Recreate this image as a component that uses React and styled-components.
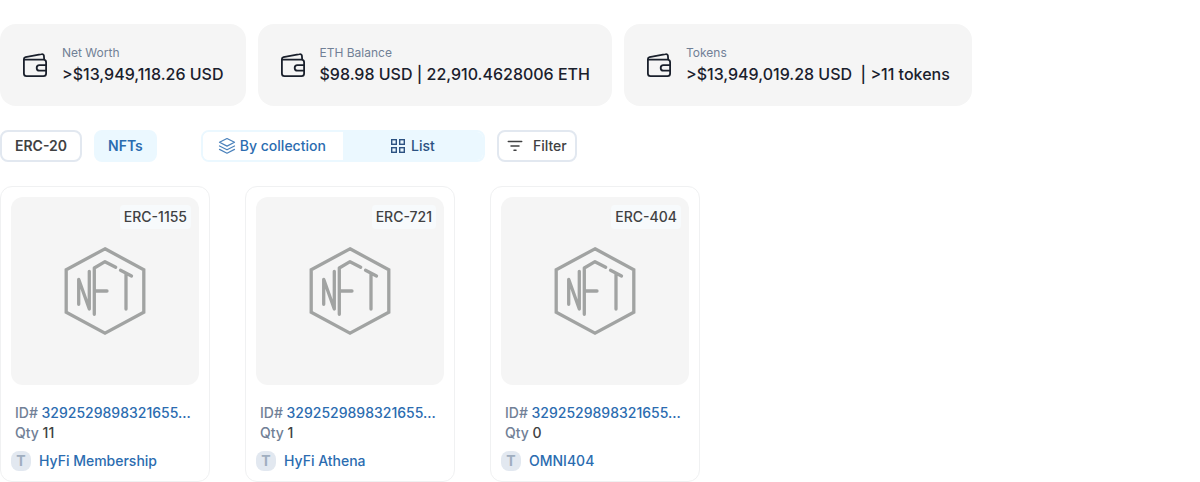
import React from "react";
import styled, { createGlobalStyle, css } from "styled-components";

const GlobalStyle = createGlobalStyle`
  *, *::before, *::after { box-sizing: border-box; }
  body {
    margin: 0;
    background: #fff;
    color: #404142;
    font-family: Inter, "Liberation Sans", sans-serif;
    font-size: 14px;
    line-height: 20px;
  }
  button { font: inherit; margin: 0; cursor: pointer; }
  p { margin: 0; }
`;

const Page = styled.main`
  padding-top: 24px;
`;

const Stats = styled.section`
  display: flex;
  flex-wrap: wrap;
  gap: 12px;
`;

const Stat = styled.div`
  display: flex;
  align-items: center;
  gap: 12px;
  padding: 20px 22px 20px 20px;
  border-radius: 16px;
  background: #f5f5f5;
  color: #1a202c;
`;

const StatLabel = styled.p`
  font-size: 12px;
  line-height: 18px;
  color: #718096;
`;

const StatValue = styled.p`
  font-size: 16px;
  line-height: 24px;
  font-weight: 500;
  white-space: pre;
`;

const Toolbar = styled.div`
  display: flex;
  flex-wrap: wrap;
  gap: 12px;
  margin: 24px 0;
`;

const Tab = styled.button`
  height: 32px;
  padding: 0 13px;
  border: 2px solid #e2e8f0;
  border-radius: 8px;
  background: #fff;
  color: #404142;
  font-weight: 600;
  ${({ $active }) =>
    $active &&
    css`
      padding: 0 12px;
      border-color: #ebf8ff;
      background: #ebf8ff;
      color: #2b6cb0;
    `}
`;

const ViewSwitch = styled.div`
  display: grid;
  grid-template-columns: 1fr 1fr;
  height: 32px;
  margin-left: 32px;
  border: 2px solid #ebf8ff;
  border-radius: 8px;
  overflow: hidden;
`;

const ViewButton = styled.button`
  display: flex;
  align-items: center;
  justify-content: center;
  gap: 4px;
  padding: 0 17px 0 15px;
  border: 0;
  background: ${({ $filled }) => ($filled ? "#ebf8ff" : "#fff")};
  color: ${({ $filled }) => ($filled ? "#2c5282" : "#2b6cb0")};
  font-weight: 500;
`;

const FilterButton = styled.button`
  display: flex;
  align-items: center;
  gap: 8px;
  height: 32px;
  padding: 0 8px 0 6px;
  border: 2px solid #e2e8f0;
  border-radius: 8px;
  background: #fff;
  color: #404142;
  font-weight: 500;
`;

const Cards = styled.section`
  display: grid;
  grid-template-columns: repeat(auto-fill, 210px);
  column-gap: 35px;
  row-gap: 24px;
`;

const Card = styled.article`
  padding: 10px;
  border: 1px solid #f0f1f2;
  border-radius: 12px;
  font-weight: 500;
`;

const Media = styled.div`
  position: relative;
  display: flex;
  align-items: center;
  justify-content: center;
  aspect-ratio: 1;
  margin-bottom: 18px;
  border-radius: 12px;
  background: #f5f5f5;
  color: #a1a3a2;
`;

const Badge = styled.span`
  position: absolute;
  top: 8px;
  right: 8px;
  padding: 2px 4px;
  border-radius: 4px;
  background: #f7fafc;
  color: #404142;
`;

const Line = styled.p`
  padding: 0 4px;
  overflow: hidden;
  white-space: nowrap;
`;

const Muted = styled.span`
  color: #718096;
`;

const Link = styled.a`
  color: #2b6cb0;
  text-decoration: none;
`;

const Token = styled.div`
  display: flex;
  align-items: center;
  gap: 8px;
  margin-top: 8px;
`;

const TokenMark = styled.span`
  width: 20px;
  height: 20px;
  border-radius: 8px;
  background: #e2e8f0;
  color: #a0aec0;
  font-weight: 700;
  text-align: center;
`;

const WalletIcon = () => (
  <svg width="30" height="30" viewBox="0 0 30 30" fill="none" stroke="currentColor" strokeWidth="1.8" strokeLinejoin="round" strokeLinecap="round" aria-hidden="true">
    <path d="M3.900 9.600H23.500a2.600 2.600 0 0 1 2.600 2.600V23.500a2.600 2.600 0 0 1-2.600 2.600H6.500A2.600 2.600 0 0 1 3.900 23.500V9c0-1 .7-1.700 1.600-1.900L21.600 4.200c1.300-.3 2.100.3 2.300 1.500l.3 3.900" />
    <path d="M26.100 15.200H19.400a2.700 2.700 0 0 0 0 5.400h6.700" />
  </svg>
);

const LayersIcon = () => (
  <svg width="18" height="18" viewBox="0 0 18 18" fill="none" stroke="currentColor" strokeWidth="1.2" strokeLinejoin="round" strokeLinecap="round" aria-hidden="true" opacity="0.85">
    <path d="M9 1.500 16.500 5.300 9 9.100 1.500 5.300Z" />
    <path d="M1.500 9 9 12.800 16.500 9" />
    <path d="M1.500 12.400 9 16.200 16.500 12.400" />
  </svg>
);

const GridIcon = () => (
  <svg width="18" height="18" viewBox="0 0 18 18" fill="none" stroke="currentColor" strokeWidth="1.400" aria-hidden="true">
    <rect x="2.700" y="2.700" width="4.600" height="4.600" />
    <rect x="10.700" y="2.700" width="4.600" height="4.600" />
    <rect x="2.700" y="10.700" width="4.600" height="4.600" />
    <rect x="10.700" y="10.700" width="4.600" height="4.600" />
  </svg>
);

const FilterIcon = () => (
  <svg width="20" height="20" viewBox="0 0 20 20" fill="none" stroke="currentColor" strokeWidth="1.500" strokeLinecap="round" aria-hidden="true">
    <path d="M3.300 5.600h13.400M6 10h8M9 14.300h2" />
  </svg>
);

const NftPlaceholder = () => (
  <svg width="90" height="90" viewBox="0 0 90 90" fill="none" stroke="currentColor" strokeWidth="3.300" strokeLinejoin="round" strokeLinecap="round" aria-hidden="true">
    <path strokeLinejoin="miter" d="M45 2.800 83.800 23.700V66.300L45 87.200 6.200 66.300V23.700Z" />
    <path d="M18.700 58.300V33.300L29.300 63V25.300" />
    <path d="M34.300 68.300V22L45 15.700 55.700 21.300M34.300 45H47" />
    <path d="M60.500 24.300 71.500 30M66 27.500V63" />
  </svg>
);

const stats = [
  { label: "Net Worth", value: ">$13,949,118.26 USD" },
  { label: "ETH Balance", value: "$98.98 USD | 22,910.4628006 ETH" },
  { label: "Tokens", value: ">$13,949,019.28 USD  | >11 tokens" },
];

const nfts = [
  { type: "ERC-1155", id: "3292529898321655...", qty: 11, name: "HyFi Membership" },
  { type: "ERC-721", id: "3292529898321655...", qty: 1, name: "HyFi Athena" },
  { type: "ERC-404", id: "3292529898321655...", qty: 0, name: "OMNI404" },
];

export default function App() {
  return (
    <>
      <GlobalStyle />
      <Page>
        <Stats>
          {stats.map((s) => (
            <Stat key={s.label}>
              <WalletIcon />
              <div>
                <StatLabel>{s.label}</StatLabel>
                <StatValue>{s.value}</StatValue>
              </div>
            </Stat>
          ))}
        </Stats>
        <Toolbar>
          <Tab type="button">ERC-20</Tab>
          <Tab type="button" $active>NFTs</Tab>
          <ViewSwitch>
            <ViewButton type="button">
              <LayersIcon />
              By collection
            </ViewButton>
            <ViewButton type="button" $filled>
              <GridIcon />
              List
            </ViewButton>
          </ViewSwitch>
          <FilterButton type="button">
            <FilterIcon />
            Filter
          </FilterButton>
        </Toolbar>
        <Cards>
          {nfts.map((n) => (
            <Card key={n.name}>
              <Media>
                <NftPlaceholder />
                <Badge>{n.type}</Badge>
              </Media>
              <Line>
                <Muted>ID#</Muted> <Link href="#instance">{n.id}</Link>
              </Line>
              <Line>
                <Muted>Qty</Muted> {n.qty}
              </Line>
              <Token>
                <TokenMark>T</TokenMark>
                <Link href="#token">{n.name}</Link>
              </Token>
            </Card>
          ))}
        </Cards>
      </Page>
    </>
  );
}
